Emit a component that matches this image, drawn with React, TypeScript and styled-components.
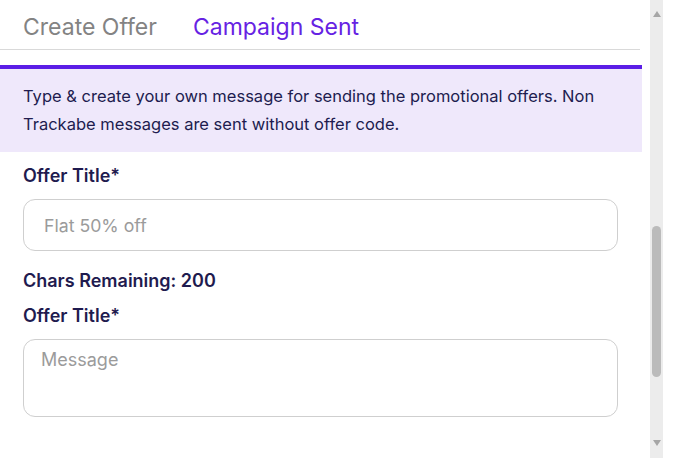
import React from 'react';
import styled, { createGlobalStyle } from 'styled-components';

const GlobalStyle = createGlobalStyle`
  html, body {
    margin: 0;
    padding: 0;
    background: #ffffff;
    overflow: hidden;
  }
  * {
    box-sizing: border-box;
  }
`;

const Page = styled.div`
  display: flex;
  width: 674px;
  height: 460px;
  font-family: Inter, 'Liberation Sans', sans-serif;
  background: #ffffff;
`;

const Main = styled.div`
  width: 642px;
  display: flex;
  flex-direction: column;
`;

const TabBar = styled.div`
  display: flex;
  align-items: center;
  gap: 36px;
  height: 50px;
  padding: 5px 23px 0;
  border-bottom: 1px solid #d9d9d9;
  margin-right: 2px;
`;

const Tab = styled.div<{ $active?: boolean }>`
  font-size: 23px;
  line-height: 28px;
  color: ${(p) => (p.$active ? '#6622e3' : '#838383')};
`;

const Banner = styled.div`
  margin-top: 15px;
  border-top: 4px solid #5b1de6;
  background: #efe8fb;
  padding: 13px 23px 14px;
  font-size: 16.5px;
  line-height: 28px;
  color: #211c4f;
`;

const Form = styled.div`
  display: flex;
  flex-direction: column;
  padding: 13px 24px 0 23px;
`;

const Label = styled.div<{ $gap?: number }>`
  font-size: 18px;
  line-height: 21px;
  font-weight: 600;
  color: #1f1b4f;
  margin-top: ${(p) => p.$gap ?? 0}px;
`;

const Input = styled.input`
  margin-top: 13px;
  height: 52px;
  width: 100%;
  border: 1px solid #cfcfcf;
  border-radius: 12px;
  padding: 0 20px;
  font-family: inherit;
  font-size: 17.7px;
  color: #333;
  outline: none;
  &::placeholder {
    color: #9b9b9b;
  }
`;

const TextArea = styled.textarea`
  margin-top: 13px;
  height: 78px;
  width: 100%;
  border: 1px solid #cfcfcf;
  border-radius: 12px;
  padding: 10px 17px;
  font-family: inherit;
  font-size: 18px;
  line-height: 20px;
  color: #333;
  resize: none;
  outline: none;
  &::placeholder {
    color: #9b9b9b;
  }
`;

const ScrollTrack = styled.div`
  margin-left: 8px;
  width: 13px;
  height: 458px;
  background: #ececec;
  display: flex;
  flex-direction: column;
  align-items: center;
  padding: 11px 0 12px;
`;

const Arrow = styled.div<{ $down?: boolean }>`
  width: 0;
  height: 0;
  border-left: 4px solid transparent;
  border-right: 4px solid transparent;
  ${(p) =>
    p.$down
      ? 'border-top: 6px solid #a6a6a6;'
      : 'border-bottom: 6px solid #a6a6a6;'}
`;

const ThumbArea = styled.div`
  flex: 1;
  width: 100%;
  display: flex;
  flex-direction: column;
  align-items: center;
  padding-top: 209px;
`;

const Thumb = styled.div`
  width: 9px;
  height: 151px;
  border-radius: 5px;
  background: #bbbbbb;
`;

export default function App() {
  return (
    <>
      <GlobalStyle />
      <Page>
        <Main>
          <TabBar>
            <Tab>Create Offer</Tab>
            <Tab $active>Campaign Sent</Tab>
          </TabBar>
          <Banner>
            Type &amp; create your own message for sending the promotional offers. Non
            Trackabe messages are sent without offer code.
          </Banner>
          <Form>
            <Label>Offer Title*</Label>
            <Input placeholder="Flat 50% off" />
            <Label $gap={19}>Chars Remaining: 200</Label>
            <Label $gap={14}>Offer Title*</Label>
            <TextArea placeholder="Message" />
          </Form>
        </Main>
        <ScrollTrack>
          <Arrow />
          <ThumbArea>
            <Thumb />
          </ThumbArea>
          <Arrow $down />
        </ScrollTrack>
      </Page>
    </>
  );
}
